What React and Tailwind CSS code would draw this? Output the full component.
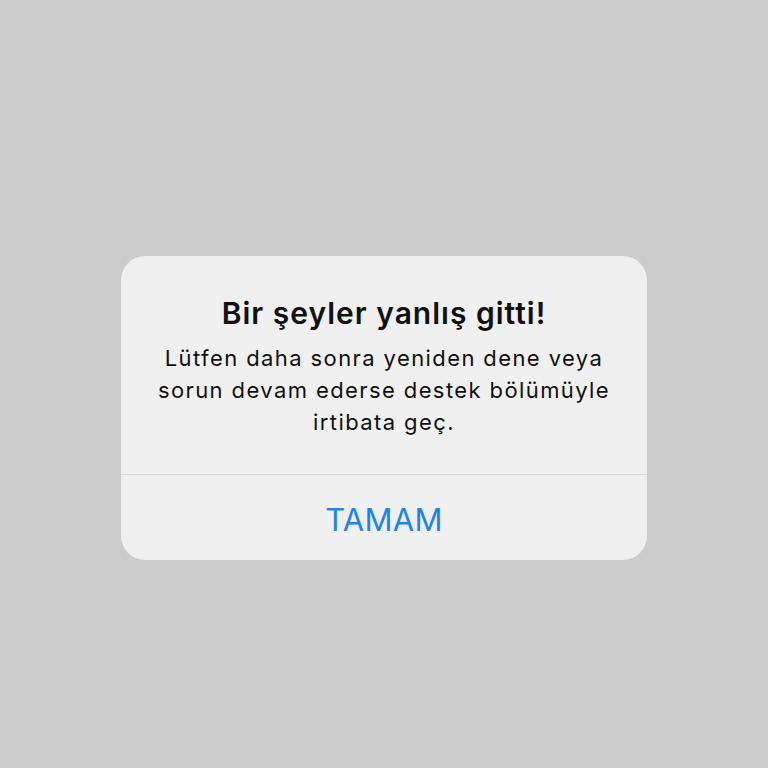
export default function App() {
  return (
    <div className="min-h-[768px] w-full bg-[#cbcbcb] pt-[256px]" style={{ fontFamily: 'Inter, "Noto Sans", sans-serif' }}>
      <div className="mx-auto w-[526px] overflow-hidden rounded-[24px] bg-[#f0f0f0]">
        <div className="px-6 pt-[39px] pb-[36px] text-center text-[#111111]">
          <h1 className="text-[30px] leading-[36px] font-semibold tracking-[1px]">Bir şeyler yanlış gitti!</h1>
          <p className="mt-[11px] text-[22px] leading-[32px] tracking-[1.4px]">
            Lütfen daha sonra yeniden dene veya
            <br />
            sorun devam ederse destek bölümüyle
            <br />
            irtibata geç.
          </p>
        </div>
        <div className="h-px bg-[#d8d8d8]" />
        <button type="button" className="flex h-[85px] w-full items-center justify-center pt-[6px] text-[31px] tracking-[0.3px] text-[#1c84ef]">
          TAMAM
        </button>
      </div>
    </div>
  )
}
